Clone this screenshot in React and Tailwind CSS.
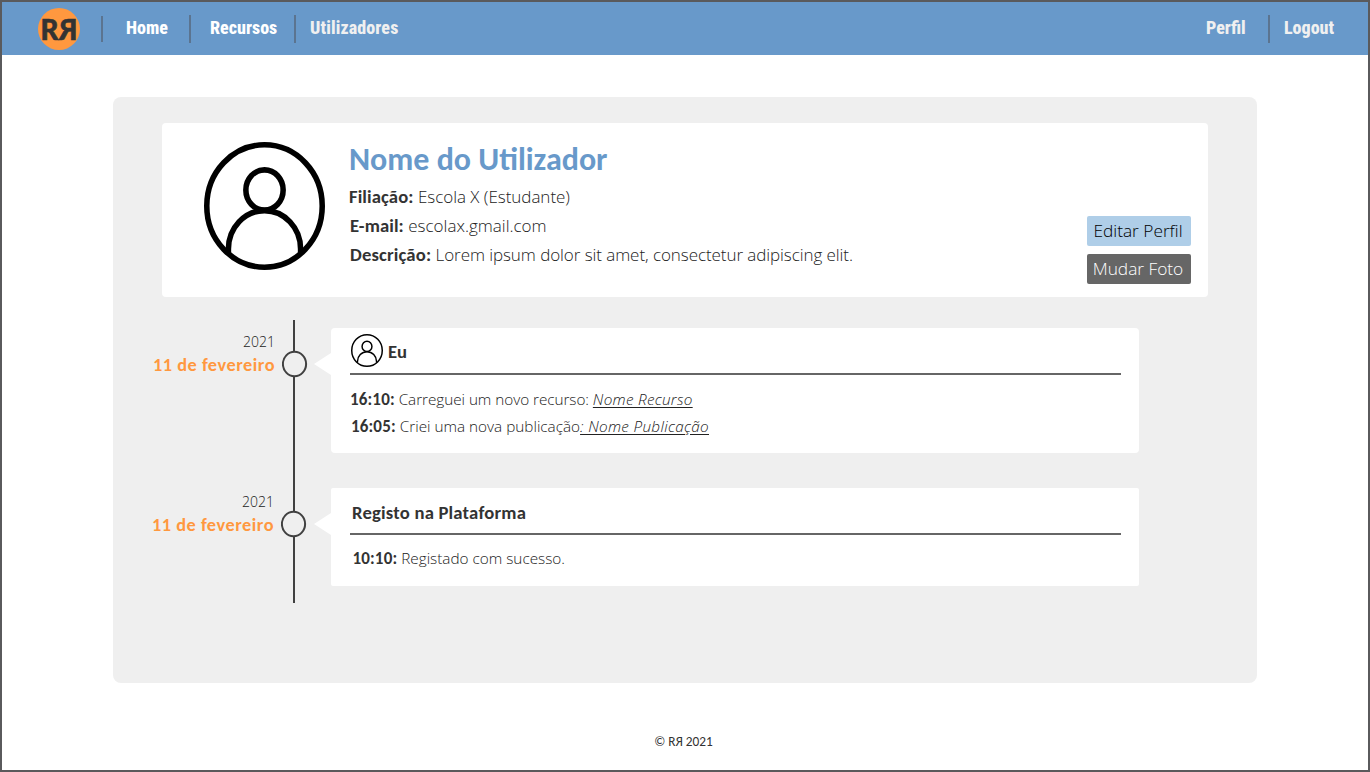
function Avatar({ className, stroke }) {
  return (
    <svg className={className} viewBox="0 0 122 128" preserveAspectRatio="none" fill="none" stroke="#000" strokeWidth={stroke}>
      <ellipse cx="61" cy="64" rx="58.2" ry="61.2" />
      <ellipse cx="61" cy="48" rx="18.8" ry="20.1" />
      <path d="M24.6 111V107A36.4 38.4 0 0 1 97.4 107V111" />
    </svg>
  );
}

function Divider({ className }) {
  return <span className={`w-0.5 shrink-0 bg-[#5b7490] ${className}`} />;
}

function Entry({ height, year, date, offset, children }) {
  return (
    <div className={`flex pt-2 ${height}`}>
      <div className={`w-[162px] shrink-0 pt-1 text-right text-[#333] ${offset}`}>
        <div className="font-['Open_Sans',sans-serif] text-[14px] leading-5 font-[330] text-[#222]">{year}</div>
        <div className="text-[18.3px] leading-[26px] font-bold tracking-[0.53px] text-[#ff983f]">{date}</div>
      </div>
      {children}
    </div>
  );
}

function Node({ className }) {
  return (
    <svg className={`relative shrink-0 ${className}`} width="26" height="28" viewBox="0 0 26 28">
      <ellipse cx="12.5" cy="14" rx="11.6" ry="12.2" fill="#efefef" stroke="#404040" strokeWidth="2" />
    </svg>
  );
}

function Pointer() {
  return (
    <svg className="mt-[25px] shrink-0" width="17" height="23" viewBox="0 0 17 23">
      <path d="M0 11L17 0V22Z" fill="#fff" />
    </svg>
  );
}

function Label({ className = "", children }) {
  return <b className={`font-['Carlito','Lato',sans-serif] font-bold text-[#333] ${className}`}>{children}</b>;
}

export default function App() {
  return (
    <div className="flex h-[772px] w-[1370px] flex-col overflow-hidden border-2 border-[#5a5a5c] bg-white font-['Carlito','Lato',sans-serif] text-[#333]">
      <header className="flex h-[53px] shrink-0 items-start bg-[#6899ca] font-['Roboto_Condensed','Roboto',sans-serif] text-[18px] leading-[52px] font-extrabold text-white font-stretch-condensed">
        <div className="mt-1.5 ml-9 flex size-[42px] items-center justify-center rounded-full bg-[#ff983f] font-['Carlito','Lato',sans-serif] text-[32px] leading-[42px] text-[#333] [-webkit-text-stroke:0.6px_#333]">
          <span className="relative top-px">RЯ</span>
        </div>
        <Divider className="mt-3.5 ml-[21px] h-[26px]" />
        <a className="ml-[23px] w-[63px]">Home</a>
        <Divider className="mt-[13px] h-7" />
        <a className="ml-[19px] w-[84px]">Recursos</a>
        <Divider className="mt-[13px] h-7" />
        <a className="ml-[14px] tracking-[0.12px] text-[#f0f0f0]">Utilizadores</a>
        <a className="ml-auto w-[62px] text-[#f0f0f0]">Perfil</a>
        <Divider className="mt-[13px] h-7" />
        <a className="ml-[14px] w-[84px] text-[#f0f0f0]">Logout</a>
      </header>

      <main className="mt-[42px] ml-[111px] h-[586px] w-[1144px] shrink-0 rounded-lg bg-[#efefef] pt-[26px]">
        <section className="ml-[49px] flex h-[174px] w-[1046px] rounded bg-white">
          <Avatar className="mt-[19px] ml-[42px] h-32 w-[121px] shrink-0" stroke={5.6} />
          <div className="ml-6 flex-1 font-['Open_Sans',sans-serif] text-[17px] leading-[29px] font-[330] text-[#222]">
            <h1 className="mt-4 h-[43px] font-['Carlito','Lato',sans-serif] text-[32px] leading-[41px] font-bold text-[#6899ca]">Nome do Utilizador</h1>
            <p className="h-[29px] tracking-[-0.03px]"><Label className="text-[18.67px] tracking-[0.1px]">Filiação:</Label> Escola X (Estudante)</p>
            <p className="h-[29px] pl-px"><Label className="text-[18.67px] tracking-[0.1px]">E-mail:</Label> escolax.gmail.com</p>
            <p className="h-[29px] pl-px tracking-[-0.07px]"><Label className="text-[18.67px] tracking-[0.15px]">Descrição:</Label> Lorem ipsum dolor sit amet, consectetur adipiscing elit.</p>
          </div>
          <div className="mr-[17px] flex w-[104px] flex-col gap-2 pt-[93px] text-center font-['Open_Sans',sans-serif] text-[17.3px] leading-[30px] font-[330]">
            <button className="flex h-[30px] justify-center rounded-xs bg-[#afcee8] pr-0.5 text-black">Editar Perfil</button>
            <button className="flex h-[30px] justify-center rounded-xs bg-[#666] pr-0.5 text-white">Mudar Foto</button>
          </div>
        </section>

        <section className="relative mt-[23px]">
          <div className="absolute top-0 left-[180px] h-[283px] w-0.5 bg-[#404040]" />
          <Entry height="h-[160px]" year="2021" date="11 de fevereiro" offset="mr-[7px]">
            <Node className="mt-[22px] mr-[6px]" />
            <Pointer />
            <article className="h-[125px] w-[808px] rounded bg-white pr-[18px] pl-[19px]">
              <h2 className="flex h-[47px] items-center border-b-2 border-[#666] text-[18.67px] font-bold">
                <Avatar className="ml-px h-[33px] w-8" stroke={5.6} />
                <span className="relative top-px ml-[5px]">Eu</span>
              </h2>
              <div className="mt-[11px] font-['Open_Sans',sans-serif] text-[15.3px] leading-[27px] font-[330] text-[#222]">
                <p className="h-[27px] tracking-[-0.05px]"><Label className="text-[17px] tracking-[0.15px]">16:10:</Label> Carreguei um novo recurso: <i className="tracking-[0.28px] underline underline-offset-2">Nome Recurso</i></p>
                <p className="h-[27px] pl-px"><Label className="text-[17px] tracking-[0.15px]">16:05:</Label> Criei uma nova publicação<i className="tracking-[0.32px] underline underline-offset-2">: Nome Publicação</i></p>
              </div>
            </article>
          </Entry>
          <Entry height="h-[126px]" year="2021" date="11 de fevereiro" offset="-ml-px mr-[7px]">
            <Node className="mt-[22px] mr-[7px]" />
            <Pointer />
            <article className="h-[98px] w-[808px] rounded-xs bg-white pr-[18px] pl-[19px]">
              <h2 className="h-[47px] border-b-2 border-[#666] pl-0.5 text-[18.67px] leading-[50px] font-bold tracking-[0.2px]">Registo na Plataforma</h2>
              <p className="mt-[10px] pl-[2.5px] font-['Open_Sans',sans-serif] text-[15.3px] leading-[27px] font-[330] text-[#222]"><Label className="text-[17px] tracking-[0.15px]">10:10:</Label> Registado com sucesso.</p>
            </article>
          </Entry>
        </section>
      </main>

      <footer className="mt-[49px] -ml-[3px] text-center text-[13.3px] leading-5">© RЯ 2021</footer>
    </div>
  );
}
